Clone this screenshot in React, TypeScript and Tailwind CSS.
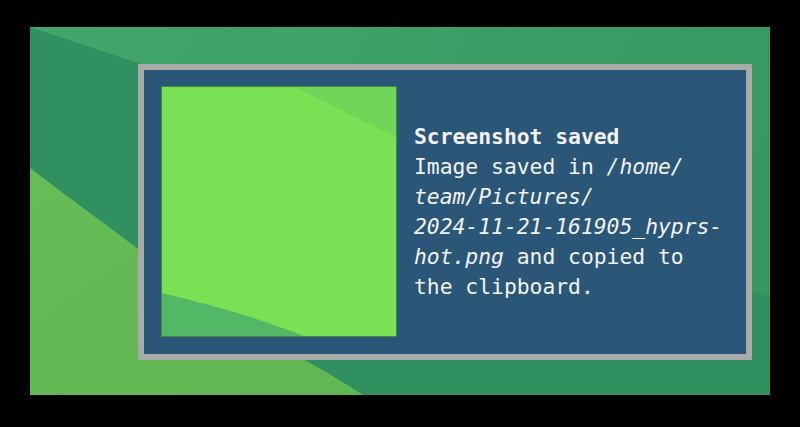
import React from 'react';

// desktop wallpaper behind the notification
const Wallpaper: React.FC = () => (
  <svg className="absolute inset-0 h-full w-full" viewBox="0 0 740 368" preserveAspectRatio="none">
    <defs>
      <linearGradient id="wp-top" x1="0" y1="0" x2="1" y2="0.3">
        <stop offset="0" stopColor="#42a66c" />
        <stop offset="1" stopColor="#379861" />
      </linearGradient>
      <linearGradient id="wp-light" x1="0" y1="0" x2="1" y2="1">
        <stop offset="0" stopColor="#66bd57" />
        <stop offset="1" stopColor="#5fb652" />
      </linearGradient>
    </defs>
    <rect width="740" height="368" fill="url(#wp-top)" />
    <path d="M0 0 L108 36 L740 270 L740 368 L0 368 Z" fill="#30905f" />
    <path d="M0 141 C40 172 80 200 108 222 C170 268 230 305 273 332 C300 347 318 358 333 368 L0 368 Z" fill="url(#wp-light)" />
  </svg>
);

// thumbnail of the captured screen
const Thumbnail: React.FC = () => (
  <div className="h-[251px] w-[236px] shrink-0 border border-[#3f8a3c]">
    <svg className="block h-full w-full" viewBox="0 0 234 249" preserveAspectRatio="none">
      <rect width="234" height="249" fill="#7ae054" />
      <path d="M132 0 L234 0 L234 50 Z" fill="#6fd65a" />
      <path d="M0 206 C50 218 100 232 142 249 L0 249 Z" fill="#52b866" />
    </svg>
  </div>
);

const App: React.FC = () => {
  return (
    <div className="h-[427px] w-[800px] overflow-hidden bg-black pl-[30px] pt-[27px]">
      <div className="relative h-[368px] w-[740px] pl-[108px] pt-[37px]">
        <Wallpaper />
        <div className="relative flex h-[296px] w-[614px] items-center border-[6px] border-[#a9aaaa] bg-[#2a5678] pl-[17px] pb-[1px]">
          <Thumbnail />
          <div
            className="ml-[17px] text-[21.33px] leading-[30px] text-[#f2f2f2]"
            style={{ fontFamily: '"DejaVu Sans Mono", "Liberation Mono", monospace' }}
          >
            <div className="font-bold">Screenshot saved</div>
            <div>
              Image saved in <i>/home/</i>
              <br />
              <i>team/Pictures/</i>
              <br />
              <i>2024-11-21-161905_hyprs-</i>
              <br />
              <i>hot.png</i> and copied to
              <br />
              the clipboard.
            </div>
          </div>
        </div>
      </div>
    </div>
  );
};

export default App;
